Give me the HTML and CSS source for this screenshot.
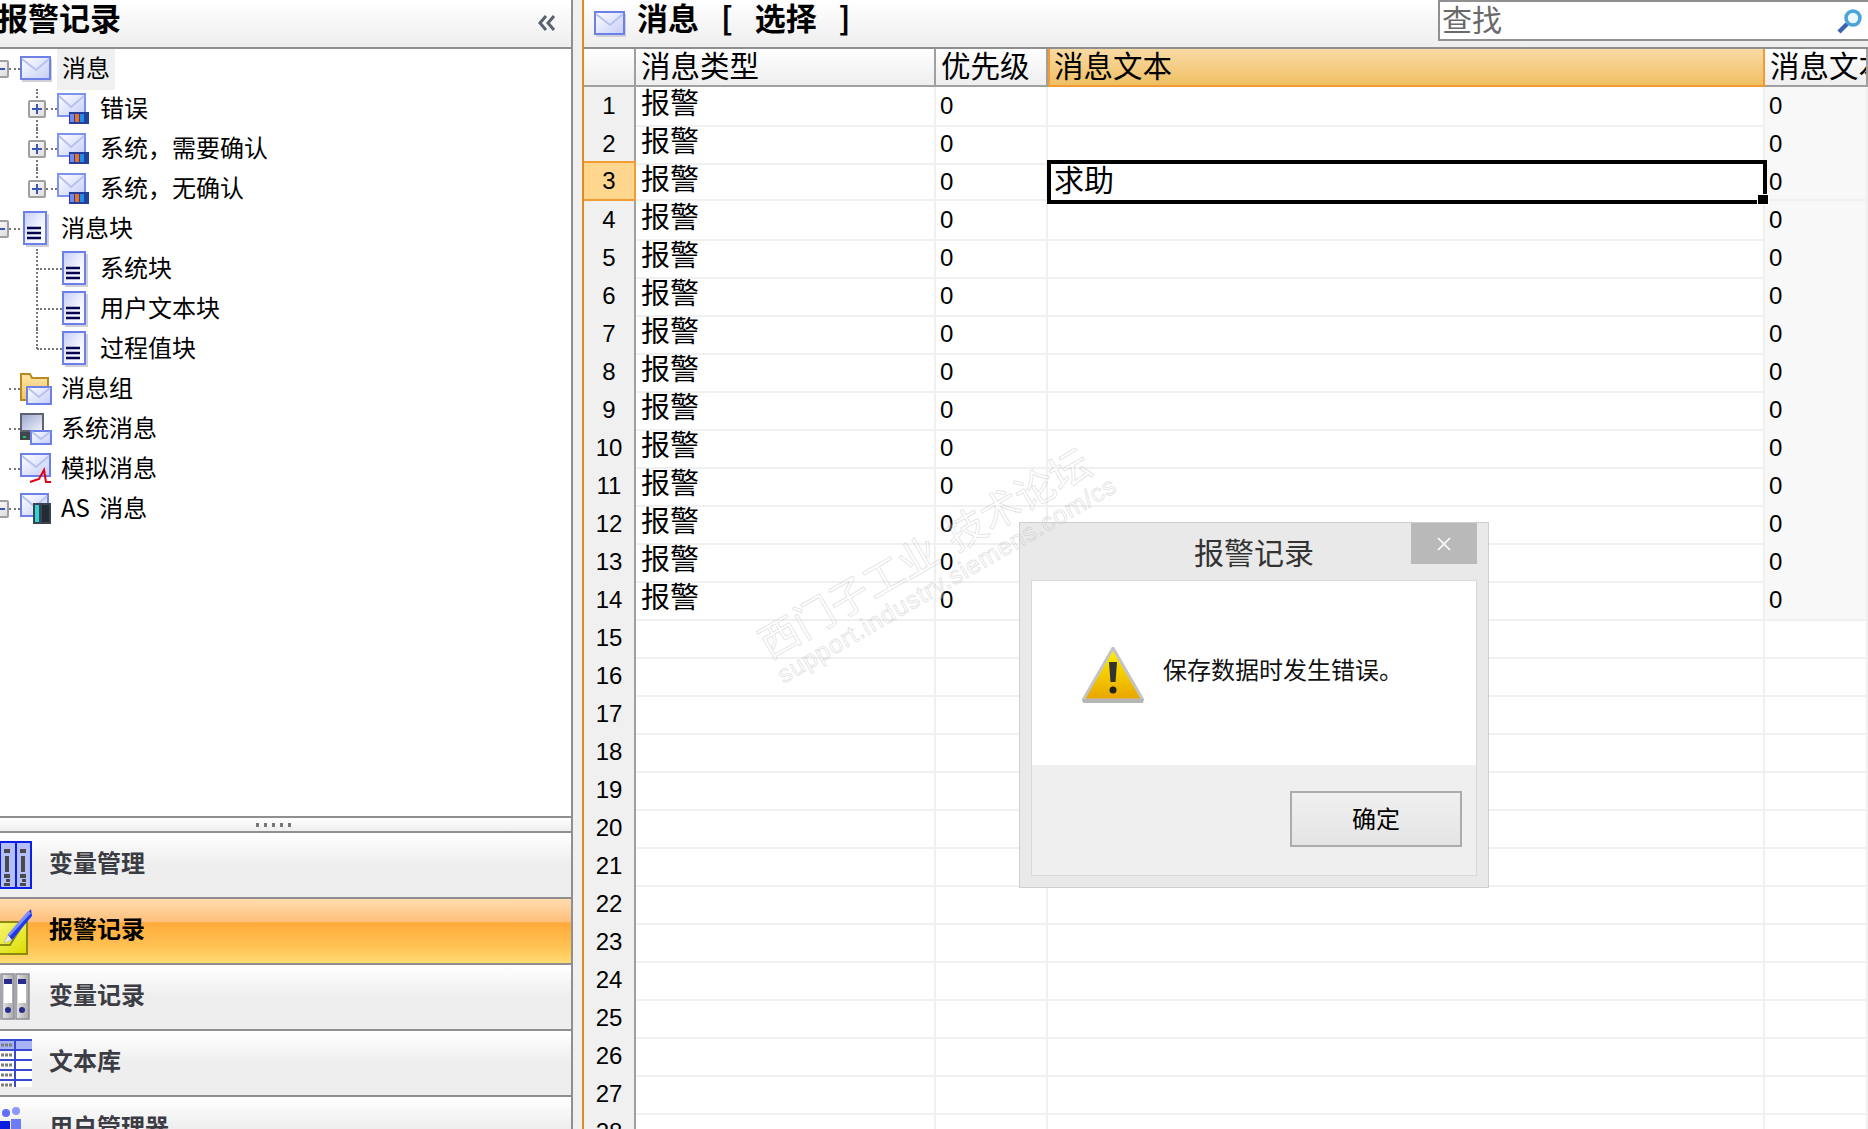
FILE: index.html
```html
<!DOCTYPE html>
<html lang="zh">
<head>
<meta charset="utf-8">
<title>报警记录</title>
<link rel="stylesheet" href="styles.css">
</head>
<body>
<svg class="sprite" aria-hidden="true">
  <defs>
    <linearGradient id="envFill" x1="0" y1="0" x2="1" y2="1"><stop offset="0" stop-color="#ffffff"/><stop offset="1" stop-color="#c4cdf6"/></linearGradient>
    <linearGradient id="docFill" x1="0" y1="0" x2="1" y2="1"><stop offset="0" stop-color="#c5cdf5"/><stop offset=".6" stop-color="#f4f6ff"/><stop offset="1" stop-color="#ffffff"/></linearGradient>
    <linearGradient id="folderFill" x1="0" y1="0" x2="0" y2="1"><stop offset="0" stop-color="#ffe6a6"/><stop offset="1" stop-color="#f2c468"/></linearGradient>
    <linearGradient id="screenFill" x1="0" y1="0" x2="1" y2="1"><stop offset="0" stop-color="#9aa4cf"/><stop offset="1" stop-color="#f2f3fb"/></linearGradient>
    <linearGradient id="noteFill" x1="0" y1="0" x2="1" y2="1"><stop offset="0" stop-color="#fbfb8c"/><stop offset="1" stop-color="#dcdc00"/></linearGradient>
    <linearGradient id="warnFill" x1="0" y1="0" x2="0" y2="1"><stop offset="0" stop-color="#fff200"/><stop offset="1" stop-color="#e8a400"/></linearGradient>
    <linearGradient id="barGrey" x1="0" y1="0" x2="1" y2="0"><stop offset="0" stop-color="#e4e4e4"/><stop offset="1" stop-color="#a9a9a9"/></linearGradient>

    <symbol id="i-env" viewBox="0 0 32 26">
      <rect x="2" y="3" width="30" height="23" fill="#d0d0d8"/>
      <rect x="1" y="1" width="29" height="22" fill="url(#envFill)" stroke="#6c80e8" stroke-width="2"/>
      <path d="M2 3 16 14 29 3" fill="none" stroke="#b7c2f2" stroke-width="2"/>
    </symbol>
    <symbol id="i-envbars" viewBox="0 0 32 32">
      <rect x="1" y="1" width="27" height="22" fill="url(#envFill)" stroke="#7f92ea" stroke-width="2"/>
      <path d="M2 3 14 14 27 3" fill="none" stroke="#b7c2f2" stroke-width="2"/>
      <rect x="12" y="19" width="20" height="12" fill="#24409c"/>
      <rect x="13" y="21" width="4" height="8" fill="#6d8bf0"/>
      <rect x="18" y="21" width="4" height="8" fill="#f2701c"/>
      <rect x="23" y="21" width="4" height="8" fill="#1f8fe8"/>
    </symbol>
    <symbol id="i-doc" viewBox="0 0 26 36">
      <rect x="3" y="3" width="23" height="33" fill="#d0d0d8"/>
      <rect x="1" y="1" width="22" height="32" fill="url(#docFill)" stroke="#6c80e8" stroke-width="2"/>
      <path d="M4 17H18M4 22H18M4 27H18" stroke="#05054f" stroke-width="2.4"/>
    </symbol>
    <symbol id="i-folder" viewBox="0 0 32 32">
      <path d="M1 27V1H10L12 5H28V20H16V27Z" fill="url(#folderFill)" stroke="#b78a22" stroke-width="2"/>
      <rect x="7" y="14" width="24" height="17" fill="url(#envFill)" stroke="#6c80e8" stroke-width="2"/>
      <path d="M8 15 19 24 30 15" fill="none" stroke="#b7c2f2" stroke-width="2"/>
    </symbol>
    <symbol id="i-pc" viewBox="0 0 32 32">
      <rect x="1" y="1" width="22" height="17" fill="url(#screenFill)" stroke="#5d6470" stroke-width="2"/>
      <rect x="0" y="19" width="24" height="8" fill="#3f4650"/>
      <rect x="3" y="23" width="3" height="2" fill="#22c55e"/>
      <rect x="11" y="18" width="20" height="13" fill="url(#envFill)" stroke="#6c80e8" stroke-width="2"/>
      <path d="M12 19 21 26 30 19" fill="none" stroke="#b7c2f2" stroke-width="2"/>
    </symbol>
    <symbol id="i-sim" viewBox="0 0 32 32">
      <rect x="1" y="1" width="29" height="22" fill="url(#envFill)" stroke="#6c80e8" stroke-width="2"/>
      <path d="M2 3 16 14 29 3" fill="none" stroke="#b7c2f2" stroke-width="2"/>
      <path d="M10 29 19 26 24 17 26 29H31" fill="none" stroke="#e00012" stroke-width="2"/>
    </symbol>
    <symbol id="i-as" viewBox="0 0 32 32">
      <rect x="1" y="1" width="27" height="22" fill="url(#envFill)" stroke="#6c80e8" stroke-width="2"/>
      <path d="M2 3 15 14 27 3" fill="none" stroke="#b7c2f2" stroke-width="2"/>
      <rect x="13" y="10" width="18" height="21" fill="#3a4450"/>
      <rect x="15" y="12" width="4" height="17" fill="#2fd5d5"/>
      <rect x="22" y="12" width="7" height="17" fill="#232b36"/>
    </symbol>
    <symbol id="n-binders" viewBox="0 0 48 48">
      <g fill="#b4bffa" stroke="#0b1ee8" stroke-width="2">
        <rect x="1" y="1" width="15" height="46"/>
        <rect x="16" y="1" width="16" height="46"/>
        <rect x="32" y="1" width="15" height="46"/>
      </g>
      <g fill="#4a4a4a">
        <path d="M20 8h6v4h-6zM21 15h4v16h-4zM20 33h6v4h-6zM22 38h4v3h-4zM20 42h6v3h-6z"/>
        <path d="M36 8h6v4h-6zM37 15h4v16h-4zM36 33h6v4h-6zM38 38h4v3h-4zM36 42h6v3h-6z"/>
      </g>
    </symbol>
    <symbol id="n-note" viewBox="0 0 48 48">
      <rect x="1" y="15" width="42" height="32" fill="url(#noteFill)" stroke="#8a8a10" stroke-width="2"/>
      <path d="M8 38H26L36 22" fill="none" stroke="#8a8a10" stroke-width="2"/>
      <path d="M47 2 24 28l-4 8 8-3L48 9Z" fill="#1f38ee"/>
      <path d="M24 28l4 5-8 3z" fill="#e8e8f4"/>
      <path d="M44 4 24 27l2 2L47 6Z" fill="#7d8ef8"/>
    </symbol>
    <symbol id="n-grey" viewBox="0 0 48 48">
      <g fill="url(#barGrey)" stroke="#8d8d96" stroke-width="1.5">
        <rect x="3" y="1" width="13" height="45"/>
        <rect x="18" y="1" width="12" height="45"/>
        <rect x="32" y="1" width="13" height="45"/>
      </g>
      <g fill="#ffffff"><rect x="20" y="6" width="8" height="24"/><rect x="34" y="6" width="8" height="24"/></g>
      <g fill="#2b2b8c"><rect x="20" y="6" width="8" height="5"/><rect x="34" y="6" width="8" height="5"/><circle cx="24" cy="37" r="3"/><circle cx="38" cy="37" r="3"/></g>
    </symbol>
    <symbol id="n-table" viewBox="0 0 48 48">
      <rect x="0" y="0" width="48" height="48" fill="#ffffff"/>
      <rect x="0" y="1" width="48" height="10" fill="#a6b4f6"/>
      <path d="M0 1H48M0 11H48M0 21H48M0 31H48M0 41H48M31 0V48" fill="none" stroke="#3a4ad0" stroke-width="2"/>
      <path d="M17 6h11M17 16h12M17 26h12M17 36h12M17 46h12" stroke="#7c7c7c" stroke-width="3" stroke-dasharray="3 1"/>
    </symbol>
    <symbol id="n-users" viewBox="0 0 48 48">
      <circle cx="22" cy="8" r="4" fill="#5f6ff5"/><circle cx="32" cy="6" r="4" fill="#8c98fa"/>
      <path d="M16 16h10v26H16z" fill="#0b1ee0"/><path d="M27 14h10v28H27z" fill="#6c7cf8"/>
    </symbol>
  </defs>
</svg>

<div class="app">
  <aside class="side">
    <header class="side-title">
      <h1 class="side-name">报警记录</h1>
      <svg class="collapse" viewBox="0 0 20 16"><path d="M9 1 3 8l6 7M17 1l-6 7 6 7" fill="none" stroke="#5a6270" stroke-width="3"/></svg>
    </header>

    <div class="tree">
      <div class="t t0 exp"><i class="box"></i><i class="dash"></i><svg class="ic env"><use href="#i-env"/></svg><span class="lbl cur">消息</span></div>
      <div class="t t1 exp v"><i class="box plus"></i><i class="dash"></i><svg class="ic sub"><use href="#i-envbars"/></svg><span class="lbl">错误</span></div>
      <div class="t t1 exp v"><i class="box plus"></i><i class="dash"></i><svg class="ic sub"><use href="#i-envbars"/></svg><span class="lbl">系统，需要确认</span></div>
      <div class="t t1 exp v up"><i class="box plus"></i><i class="dash"></i><svg class="ic sub"><use href="#i-envbars"/></svg><span class="lbl">系统，无确认</span></div>
      <div class="t t0 exp"><i class="box"></i><i class="dash"></i><svg class="ic doc0"><use href="#i-doc"/></svg><span class="lbl">消息块</span></div>
      <div class="t t1 v"><i class="nobox"></i><i class="dash"></i><svg class="ic doc"><use href="#i-doc"/></svg><span class="lbl">系统块</span></div>
      <div class="t t1 v"><i class="nobox"></i><i class="dash"></i><svg class="ic doc"><use href="#i-doc"/></svg><span class="lbl">用户文本块</span></div>
      <div class="t t1 v up"><i class="nobox"></i><i class="dash"></i><svg class="ic doc"><use href="#i-doc"/></svg><span class="lbl">过程值块</span></div>
      <div class="t t0"><i class="nobox"></i><i class="dash"></i><svg class="ic env32"><use href="#i-folder"/></svg><span class="lbl">消息组</span></div>
      <div class="t t0"><i class="nobox"></i><i class="dash"></i><svg class="ic env32"><use href="#i-pc"/></svg><span class="lbl">系统消息</span></div>
      <div class="t t0"><i class="nobox"></i><i class="dash"></i><svg class="ic env32"><use href="#i-sim"/></svg><span class="lbl">模拟消息</span></div>
      <div class="t t0 exp"><i class="box"></i><i class="dash"></i><svg class="ic env32"><use href="#i-as"/></svg><span class="lbl">AS 消息</span></div>
    </div>

    <div class="splitter"><i class="grip"></i></div>

    <nav class="nav">
      <div class="nav-item"><svg class="nav-ic"><use href="#n-binders"/></svg><span>变量管理</span></div>
      <div class="nav-item on"><svg class="nav-ic"><use href="#n-note"/></svg><span>报警记录</span></div>
      <div class="nav-item"><svg class="nav-ic"><use href="#n-grey"/></svg><span>变量记录</span></div>
      <div class="nav-item"><svg class="nav-ic"><use href="#n-table"/></svg><span>文本库</span></div>
      <div class="nav-item"><svg class="nav-ic"><use href="#n-users"/></svg><span>用户管理器</span></div>
    </nav>
  </aside>

  <div class="gutter"></div>

  <main class="main">
    <header class="main-title">
      <svg class="main-ic"><use href="#i-env"/></svg>
      <h2 class="main-name">消息 [ 选择 ]</h2>
      <div class="search">
        <span class="search-text">查找</span>
        <svg class="lens" viewBox="0 0 26 26"><circle cx="16" cy="10" r="7" fill="#eef8ff" stroke="#4aa3dc" stroke-width="3.5"/><path d="M10 16 2 24" stroke="#3a62b0" stroke-width="4.5"/></svg>
      </div>
    </header>

    <div class="grid">
      <div class="r hd"><span class="rh"></span><span class="c">消息类型</span><span class="c">优先级</span><span class="c hot">消息文本</span><span class="c">消息文本</span></div>
      <div class="r"><span class="rh">1</span><span class="c t1c">报警</span><span class="c n">0</span><span class="c"></span><span class="c n l">0</span></div>
      <div class="r"><span class="rh">2</span><span class="c t1c">报警</span><span class="c n">0</span><span class="c"></span><span class="c n l">0</span></div>
      <div class="r"><span class="rh sel">3</span><span class="c t1c">报警</span><span class="c n">0</span><span class="c edit">求助</span><span class="c n l">0</span></div>
      <div class="r"><span class="rh">4</span><span class="c t1c">报警</span><span class="c n">0</span><span class="c"></span><span class="c n l">0</span></div>
      <div class="r"><span class="rh">5</span><span class="c t1c">报警</span><span class="c n">0</span><span class="c"></span><span class="c n l">0</span></div>
      <div class="r"><span class="rh">6</span><span class="c t1c">报警</span><span class="c n">0</span><span class="c"></span><span class="c n l">0</span></div>
      <div class="r"><span class="rh">7</span><span class="c t1c">报警</span><span class="c n">0</span><span class="c"></span><span class="c n l">0</span></div>
      <div class="r"><span class="rh">8</span><span class="c t1c">报警</span><span class="c n">0</span><span class="c"></span><span class="c n l">0</span></div>
      <div class="r"><span class="rh">9</span><span class="c t1c">报警</span><span class="c n">0</span><span class="c"></span><span class="c n l">0</span></div>
      <div class="r"><span class="rh">10</span><span class="c t1c">报警</span><span class="c n">0</span><span class="c"></span><span class="c n l">0</span></div>
      <div class="r"><span class="rh">11</span><span class="c t1c">报警</span><span class="c n">0</span><span class="c"></span><span class="c n l">0</span></div>
      <div class="r"><span class="rh">12</span><span class="c t1c">报警</span><span class="c n">0</span><span class="c"></span><span class="c n l">0</span></div>
      <div class="r"><span class="rh">13</span><span class="c t1c">报警</span><span class="c n">0</span><span class="c"></span><span class="c n l">0</span></div>
      <div class="r"><span class="rh">14</span><span class="c t1c">报警</span><span class="c n">0</span><span class="c"></span><span class="c n l">0</span></div>
      <div class="r"><span class="rh">15</span><span class="c"></span><span class="c"></span><span class="c"></span><span class="c"></span></div>
      <div class="r"><span class="rh">16</span><span class="c"></span><span class="c"></span><span class="c"></span><span class="c"></span></div>
      <div class="r"><span class="rh">17</span><span class="c"></span><span class="c"></span><span class="c"></span><span class="c"></span></div>
      <div class="r"><span class="rh">18</span><span class="c"></span><span class="c"></span><span class="c"></span><span class="c"></span></div>
      <div class="r"><span class="rh">19</span><span class="c"></span><span class="c"></span><span class="c"></span><span class="c"></span></div>
      <div class="r"><span class="rh">20</span><span class="c"></span><span class="c"></span><span class="c"></span><span class="c"></span></div>
      <div class="r"><span class="rh">21</span><span class="c"></span><span class="c"></span><span class="c"></span><span class="c"></span></div>
      <div class="r"><span class="rh">22</span><span class="c"></span><span class="c"></span><span class="c"></span><span class="c"></span></div>
      <div class="r"><span class="rh">23</span><span class="c"></span><span class="c"></span><span class="c"></span><span class="c"></span></div>
      <div class="r"><span class="rh">24</span><span class="c"></span><span class="c"></span><span class="c"></span><span class="c"></span></div>
      <div class="r"><span class="rh">25</span><span class="c"></span><span class="c"></span><span class="c"></span><span class="c"></span></div>
      <div class="r"><span class="rh">26</span><span class="c"></span><span class="c"></span><span class="c"></span><span class="c"></span></div>
      <div class="r"><span class="rh">27</span><span class="c"></span><span class="c"></span><span class="c"></span><span class="c"></span></div>
      <div class="r"><span class="rh">28</span><span class="c"></span><span class="c"></span><span class="c"></span><span class="c"></span></div>
    </div>

    <section class="dialog">
      <header class="dlg-head">
        <span class="dlg-title">报警记录</span>
        <span class="dlg-close"><svg viewBox="0 0 14 14"><path d="M1 1 13 13M13 1 1 13" stroke="#fff" stroke-width="1.6"/></svg></span>
      </header>
      <div class="dlg-inner">
        <div class="dlg-body">
          <svg class="warn" viewBox="0 0 62 56">
            <path d="M31 1 61 53H1Z" fill="url(#warnFill)" stroke="#c4c4c4" stroke-width="3"/>
            <rect x="1" y="52" width="60" height="4" fill="#b5b5b5"/>
            <path d="M27 15h8l-1.500 20h-5Z" fill="#333"/>
            <circle cx="31" cy="43" r="3.500" fill="#222"/>
          </svg>
          <span class="dlg-msg">保存数据时发生错误。</span>
        </div>
        <div class="dlg-foot"><span class="dlg-btn">确定</span></div>
      </div>
    </section>

    <div class="watermark">
      <div class="wm-a">西门子工业 技术论坛</div>
      <div class="wm-b">support.industry.siemens.com/cs</div>
    </div>
  </main>
</div>
</body>
</html>
```
FILE: styles.css
```css
* { box-sizing: border-box; }
html, body { margin: 0; height: 100%; overflow: hidden; background: #fff; }
body { font-family: "Noto Sans CJK SC", "Liberation Sans", sans-serif; color: #000; }
.sprite { width: 0; height: 0; display: block; }
.app { display: flex; width: 1868px; height: 1129px; overflow: hidden; }

/* left pane */
.side { width: 573px; flex: none; display: flex; flex-direction: column; border-right: 2px solid #8f8f8f; overflow: hidden; }
.side-title { height: 49px; flex: none; display: flex; align-items: center; justify-content: space-between; padding-right: 14px; border-bottom: 2px solid #8f8f8f; background: linear-gradient(#ffffff, #eeeeee); }
.side-name { margin: 0 0 14px -3px; font-size: 31px; line-height: 30px; font-weight: 700; }
.collapse { width: 20px; height: 16px; margin-top: -2px; }

/* tree */
.tree { flex: none; height: 767px; background: #fff; }
.t { position: relative; height: 40px; display: flex; align-items: center; font-size: 24px; line-height: 36px; word-spacing: 4px; }
.t0 { margin-left: -9px; }
.t0 .lbl { position: absolute; left: 70px; }
.t1 { margin-left: 28px; }
.t1 .lbl { position: absolute; left: 72px; }
.lbl { white-space: nowrap; top: 0; }
.t0 .cur { background: #f0f0f0; left: 66px; padding: 0 5px; height: 41px; }
.box { width: 18px; height: 18px; flex: none; border: 2px solid #a0a0a0; border-radius: 2px; background: linear-gradient(135deg, #fff, #ddd); position: relative; }
.box::before { content: ""; position: absolute; left: 2px; right: 2px; top: 6px; height: 2px; background: #3f56b0; }
.plus::after { content: ""; position: absolute; top: 2px; bottom: 2px; left: 6px; width: 2px; background: #3f56b0; }
.nobox { width: 18px; flex: none; }
.dash { width: 11px; flex: none; border-top: 2px dotted #777; }
.t1 .nobox { width: 9px; }
.t1 .nobox + .dash { width: 25px; }
.v::before { content: ""; position: absolute; left: 8px; top: 0; bottom: 0; border-left: 2px dotted #777; }
.up::before { bottom: 50%; }
.box, .ic { z-index: 1; }
.ic { flex: none; display: block; }
.env { width: 32px; height: 26px; }
.sub { width: 32px; height: 32px; }
.doc0 { width: 26px; height: 36px; margin: 0 0 0 3px; }
.doc { width: 26px; height: 36px; }
.env32 { width: 32px; height: 32px; }

/* splitter + nav */
.splitter { flex: none; height: 17px; display: flex; align-items: center; justify-content: center; padding-right: 23px; border-top: 2px solid #8f8f8f; border-bottom: 2px solid #8f8f8f; background: linear-gradient(#ffffff, #eeeeee); }
.grip { width: 37px; height: 4px; background: repeating-linear-gradient(90deg, #777 0 3px, transparent 3px 8px); }
.nav { flex: none; }
.nav-item { height: 66px; display: flex; align-items: center; gap: 17px; font-size: 24px; font-weight: 700; color: #3c3c44; border-bottom: 2px solid #8f8f8f; background: linear-gradient(#ffffff, #eeeeee 50%, #eeeeee); }
.nav-item span { line-height: 30px; margin-bottom: 6px; }
.nav-ic { width: 48px; height: 48px; flex: none; margin-left: -16px; }
.on { color: #000; background: linear-gradient(#ffdcae 0, #ffbf7a 36%, #ffab3b 37%, #ffc254 75%, #ffdc72 100%); }

/* gutter */
.gutter { width: 9px; flex: none; background: #f0f0f0; }

/* right pane */
.main { flex: 1; position: relative; overflow: hidden; border-left: 2px solid #e08a1e; }
.main-title { height: 49px; display: flex; align-items: center; padding-left: 10px; border-bottom: 2px solid #8f8f8f; background: linear-gradient(#ffffff, #eeeeee); }
.main-ic { width: 32px; height: 26px; flex: none; }
.main-name { margin: 0 0 14px 11px; font-size: 31px; line-height: 30px; font-weight: 700; white-space: nowrap; word-spacing: 15px; }
.search { margin-left: auto; width: 430px; height: 41px; margin-bottom: 6px; display: flex; align-items: center; justify-content: space-between; padding: 0 5px 0 2px; background: #fff; border: 2px solid #909090; border-right: 0; }
.search-text { font-size: 30px; line-height: 30px; margin-bottom: 6px; color: #6a6a6a; }
.lens { width: 26px; height: 26px; }

/* grid */
.r { display: grid; grid-template-columns: 52px 300px 112px 717px 103px; height: 38px; }
.rh { display: flex; align-items: center; justify-content: center; font: 24px/38px "Liberation Sans", sans-serif; background: #f0f0f0; border-right: 2px solid #a0a0a0; border-bottom: 2px solid #a0a0a0; }
.rh.sel { background: #ffd68e; border: 2px solid #f29a33; border-left: 0; margin-top: -2px; height: 40px; }
.c { border-right: 2px solid #f0f0f0; border-bottom: 2px solid #f0f0f0; padding-left: 5px; white-space: nowrap; overflow: hidden; }
.t1c { font-size: 29px; line-height: 28px; }
.n { font: 24px/38px "Liberation Sans", sans-serif; padding-left: 4px; }
.l { background: #f8f8f8; }
.hd .rh { background: linear-gradient(#ffffff, #eeeeee); }
.hd .c { font-size: 29.5px; line-height: 31px; background: linear-gradient(#ffffff, #eeeeee); border-right: 2px solid #a0a0a0; border-bottom: 2px solid #a0a0a0; }
.hd .hot { background: linear-gradient(#f9daa4, #efc064); border-color: #f59a33; border-left: 2px solid #f59a33; padding-left: 4px; }
.edit { position: relative; z-index: 2; margin: -3px -2px -3px -1px; padding-left: 3px; border: 4px solid #000; background: #fff; font-size: 30px; line-height: 29px; overflow: visible; }
.edit::after { content: ""; position: absolute; right: -6px; bottom: -5px; width: 10px; height: 9px; background: #000; border: 1px solid #fff; }

/* dialog */
.dialog { position: absolute; left: 435px; top: 522px; width: 470px; height: 366px; display: flex; flex-direction: column; padding: 0 11px 11px; background: #e9e9e9; border: 1px solid #cfcfcf; z-index: 5; }
.dlg-head { height: 57px; flex: none; display: flex; justify-content: center; align-items: center; position: relative; }
.dlg-title { font-size: 30px; line-height: 40px; color: #333; font-weight: 400; margin-bottom: 1px; }
.dlg-close { position: absolute; right: 0; top: 0; width: 66px; height: 41px; display: flex; align-items: center; justify-content: center; background: #b9b9b9; }
.dlg-close svg { width: 14px; height: 14px; }
.dlg-inner { flex: 1; display: flex; flex-direction: column; border: 1px solid #d9d9d9; background: #efefef; }
.dlg-body { height: 184px; flex: none; display: flex; align-items: flex-start; background: #fff; padding: 66px 0 0 50px; gap: 19px; }
.warn { width: 62px; height: 56px; flex: none; }
.dlg-msg { font-size: 24px; line-height: 32px; margin-top: 6px; color: #111; white-space: nowrap; }
.dlg-foot { flex: 1; display: flex; justify-content: flex-end; padding: 26px 14px 0 0; }
.dlg-btn { width: 172px; height: 56px; display: flex; align-items: center; justify-content: center; padding-bottom: 2px; border: 2px solid #acacac; background: linear-gradient(#f0f0f0, #e4e4e4); font-size: 24px; line-height: 30px; }

/* watermark, laid over the whole screenshot including the dialog */
.watermark { position: absolute; left: 166px; top: 626px; z-index: 6; transform-origin: 0 0; transform: rotate(-30deg); color: rgba(255, 255, 255, .3); -webkit-text-stroke: 1px rgba(120, 120, 120, .2); white-space: nowrap; }
.wm-a { font-size: 40px; line-height: 44px; word-spacing: 6px; }
.wm-b { font: 25px/28px "Liberation Sans", sans-serif; letter-spacing: .8px; }
```
